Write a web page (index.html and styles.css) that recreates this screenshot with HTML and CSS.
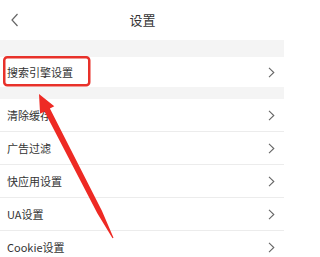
FILE: index.html
```html
<!DOCTYPE html>
<html lang="zh">
<head>
<meta charset="utf-8">
<link rel="stylesheet" href="styles.css">
</head>
<body>
<div class="page">
  <header class="header">
    <svg class="back" width="8" height="14" viewBox="0 0 8 14"><path d="M6.5 1 L1 7 L6.5 13" fill="none" stroke="#666" stroke-width="1.2"/></svg>
    <div class="title">设置</div>
  </header>
  <div class="gap gap1"></div>
  <div class="row row-first"><span>搜索引擎设置</span><svg class="chev" width="7" height="11" viewBox="0 0 7 11"><path d="M1 0.8 L5.8 5.5 L1 10.2" fill="none" stroke="#666" stroke-width="1.1"/></svg></div>
  <div class="gap gap2"></div>
  <div class="row"><span>清除缓存</span><svg class="chev" width="7" height="11" viewBox="0 0 7 11"><path d="M1 0.8 L5.8 5.5 L1 10.2" fill="none" stroke="#666" stroke-width="1.1"/></svg></div>
  <div class="row"><span>广告过滤</span><svg class="chev" width="7" height="11" viewBox="0 0 7 11"><path d="M1 0.8 L5.8 5.5 L1 10.2" fill="none" stroke="#666" stroke-width="1.1"/></svg></div>
  <div class="row"><span>快应用设置</span><svg class="chev" width="7" height="11" viewBox="0 0 7 11"><path d="M1 0.8 L5.8 5.5 L1 10.2" fill="none" stroke="#666" stroke-width="1.1"/></svg></div>
  <div class="row"><span>UA设置</span><svg class="chev" width="7" height="11" viewBox="0 0 7 11"><path d="M1 0.8 L5.8 5.5 L1 10.2" fill="none" stroke="#666" stroke-width="1.1"/></svg></div>
  <div class="row"><span>Cookie设置</span><svg class="chev" width="7" height="11" viewBox="0 0 7 11"><path d="M1 0.8 L5.8 5.5 L1 10.2" fill="none" stroke="#666" stroke-width="1.1"/></svg></div>
  <svg class="annot" width="284" height="257" viewBox="0 0 284 257">
    <rect x="4.25" y="57.25" width="85" height="28" rx="3" fill="none" stroke="#e8312a" stroke-width="2.5"/>
    <polygon points="39,94 54.3,106.3 49.9,108.6 101.9,210.8 113.5,237.7 112.5,238.3 97.3,213.2 44.5,111.4 40.1,113.7" fill="#ee2a24"/>
  </svg>
</div>
</body>
</html>
```
FILE: styles.css
```css
html, body {
  margin: 0;
  padding: 0;
  background: #fff;
}
.page {
  position: relative;
  width: 284px;
  height: 257px;
  overflow: hidden;
  font-family: "Noto Sans CJK SC", "Noto Sans", sans-serif;
  color: #333;
  background: #f4f4f4;
}
.header {
  height: 40px;
  background: #fff;
  display: flex;
  align-items: center;
  justify-content: center;
  position: relative;
}
.back {
  position: absolute;
  left: 11px;
  top: 13px;
}
.title {
  font-size: 13px;
  color: #333;
  line-height: 40px;
  padding-left: 1px;
}
.gap1 { height: 17px; }
.gap2 { height: 12px; }
.row {
  height: 32px;
  background: #fff;
  border-bottom: 1px solid #ececec;
  display: flex;
  align-items: center;
  justify-content: space-between;
  padding: 0 9px 0 7px;
  font-size: 11px;
}
.row-first {
  height: 30px;
  border-bottom: none;
}
.row span {
  line-height: 1;
}
.chev {
  display: block;
}
.annot {
  position: absolute;
  left: 0;
  top: 0;
  pointer-events: none;
}
```
